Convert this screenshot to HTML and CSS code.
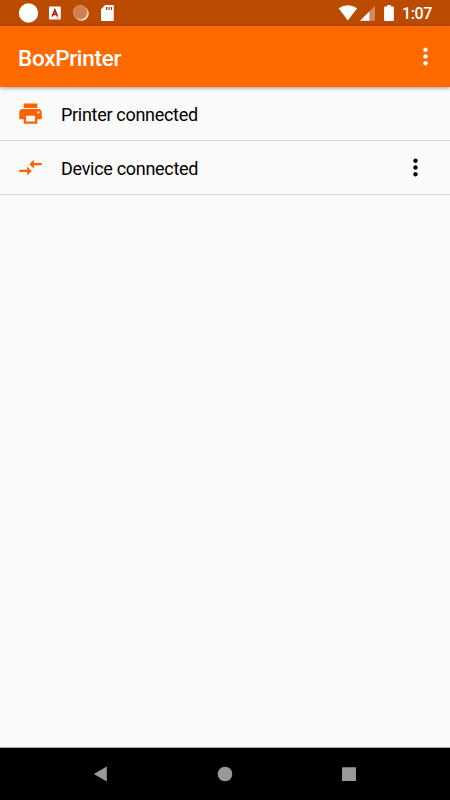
FILE: index.html
```
<!DOCTYPE html>
<html lang="en">
<head>
  <meta charset="UTF-8">
  <meta name="viewport" content="width=device-width, initial-scale=1.0">
  <title>BoxPrinter</title>
  <link rel="stylesheet" href="styles.css">
</head>
<body>

  <!-- Status Bar -->
  <div class="status-bar">
    <svg class="notifications" width="100" height="26" viewBox="0 0 100 26">
      <circle cx="10.5" cy="13" r="9.7" fill="#fff"/>
      <rect x="31" y="6.5" width="11.8" height="13" rx="1" fill="#fff"/>
      <path d="M34.2 16.5L36.9 10L39.6 16.5M35.2 14.4H38.6" fill="none" stroke="#a32c00" stroke-width="1.7"/>
      <path d="M37.5 18h4" stroke="#dba98c" stroke-width="1"/>
      <circle cx="63.5" cy="13.6" r="7.2" fill="#fff0d8"/>
      <circle cx="62.3" cy="12.4" r="7.3" fill="#ce8052"/>
      <circle cx="62.3" cy="12.4" r="6.7" fill="none" stroke="#e5b08f" stroke-width="1" stroke-dasharray="1.2 1"/>
      <path d="M87.2 5h7.6q1 0 1 1v14q0 1-1 1H84q-1 0-1-1V9.3z" fill="#fff"/>
      <path d="M88.6 7v3M91 7v3M93.4 7v3" stroke="#a33a00" stroke-width="1.2"/>
    </svg>
    <div class="system">
      <svg width="58" height="26" viewBox="0 0 58 26">
        <path d="M.6 8.3Q9.8 2.3 19.2 8.3L9.8 20.4z" fill="#fff"/>
        <path d="M37 5.8V20.8H22z" fill="#cf8a62"/>
        <path d="M31.4 11.4V20.8H22z" fill="#fff"/>
        <path d="M49 5h4v1.6h2q.9 0 .9.9V20.1q0 .9-.9.9h-8q-.9 0-.9-.9V7.5q0-.9.9-.9h2z" fill="#fff"/>
      </svg>
      <span class="time">1:07</span>
    </div>
  </div>

  <!-- App Bar -->
  <header class="app-bar">
    <h1>BoxPrinter</h1>
    <svg class="icon" viewBox="0 0 24 24">
      <path d="M12 8c1.1 0 2-.9 2-2s-.9-2-2-2-2 .9-2 2 .9 2 2 2zm0 2c-1.1 0-2 .9-2 2s.9 2 2 2 2-.9 2-2-.9-2-2-2zm0 6c-1.1 0-2 .9-2 2s.9 2 2 2 2-.9 2-2-.9-2-2-2z"/>
    </svg>
  </header>

  <!-- Connections -->
  <main>
    <div class="row">
      <svg class="icon accent" viewBox="0 0 24 24">
        <path d="M19 8H5c-1.66 0-3 1.34-3 3v6h4v4h12v-4h4v-6c0-1.66-1.34-3-3-3zm-3 11H8v-5h8v5zm3-7c-.55 0-1-.45-1-1s.45-1 1-1 1 .45 1 1-.45 1-1 1zm-1-9H6v4h12V3z"/>
      </svg>
      <span class="label">Printer connected</span>
    </div>
    <div class="row">
      <svg class="icon accent" viewBox="0 0 24 24">
        <path d="M9.01 14H2v2h7.01v3L13 15l-3.99-4v3zm5.98-1v-3H22V8h-7.01V5L11 9l3.99 4z"/>
      </svg>
      <span class="label">Device connected</span>
      <svg class="icon" viewBox="0 0 24 24">
        <path d="M12 8c1.1 0 2-.9 2-2s-.9-2-2-2-2 .9-2 2 .9 2 2 2zm0 2c-1.1 0-2 .9-2 2s.9 2 2 2 2-.9 2-2-.9-2-2-2zm0 6c-1.1 0-2 .9-2 2s.9 2 2 2 2-.9 2-2-.9-2-2-2z"/>
      </svg>
    </div>
  </main>

  <!-- Navigation Bar -->
  <nav class="nav-bar">
    <svg width="16" height="16" viewBox="0 0 16 16"><path d="M.8 8L13.8.6v14.8z"/></svg>
    <svg width="16" height="16" viewBox="0 0 16 16"><circle cx="8" cy="8" r="7.3"/></svg>
    <svg width="16" height="16" viewBox="0 0 16 16"><rect x="1" y="1.2" width="14" height="13.8" rx=".6"/></svg>
  </nav>

</body>
</html>
```

FILE: styles.css
```
* {
  box-sizing: border-box;
}

body {
  font-family: Roboto, "Liberation Sans", sans-serif;
  margin: 0;
  height: 100vh;
  display: flex;
  flex-direction: column;
  background-color: #fafafa;
  color: #000;
}

svg {
  display: block;
  flex: none;
}

.status-bar {
  height: 26px;
  padding: 0 18px;
  display: flex;
  justify-content: space-between;
  background-color: #bb4b00;
  color: #fff;
}

.system {
  display: flex;
  gap: 6px;
}

.time {
  width: 30px;
  font-size: 16px;
  font-weight: 500;
  line-height: 28px;
  letter-spacing: -0.4px;
  white-space: nowrap;
}

.app-bar {
  height: 61px;
  padding: 0 11px 0 18px;
  display: flex;
  align-items: center;
  justify-content: space-between;
  background-color: #ff6a00;
  color: #fff;
  box-shadow: 0 1px 4px rgba(0, 0, 0, 0.4);
}

h1 {
  margin: 2px 0 0;
  font-size: 22.5px;
  font-weight: 500;
  letter-spacing: -0.3px;
}

.icon {
  width: 27px;
  height: 27px;
  fill: currentColor;
}

.accent {
  color: #ff6200;
}

main {
  flex: 1;
}

.row {
  height: 54px;
  padding: 0 21.5px 0 17px;
  display: flex;
  align-items: center;
  border-bottom: 1px solid #d5d5d5;
}

.label {
  flex: 1;
  margin-left: 17px;
  padding-top: 2px;
  font-size: 18px;
  line-height: 24px;
  letter-spacing: -0.3px;
}

.nav-bar {
  height: 53px;
  padding: 0 93px;
  display: flex;
  align-items: center;
  justify-content: space-between;
  background-color: #000;
  border-top: 1px solid #a8a8a8;
  fill: #999;
}
```
